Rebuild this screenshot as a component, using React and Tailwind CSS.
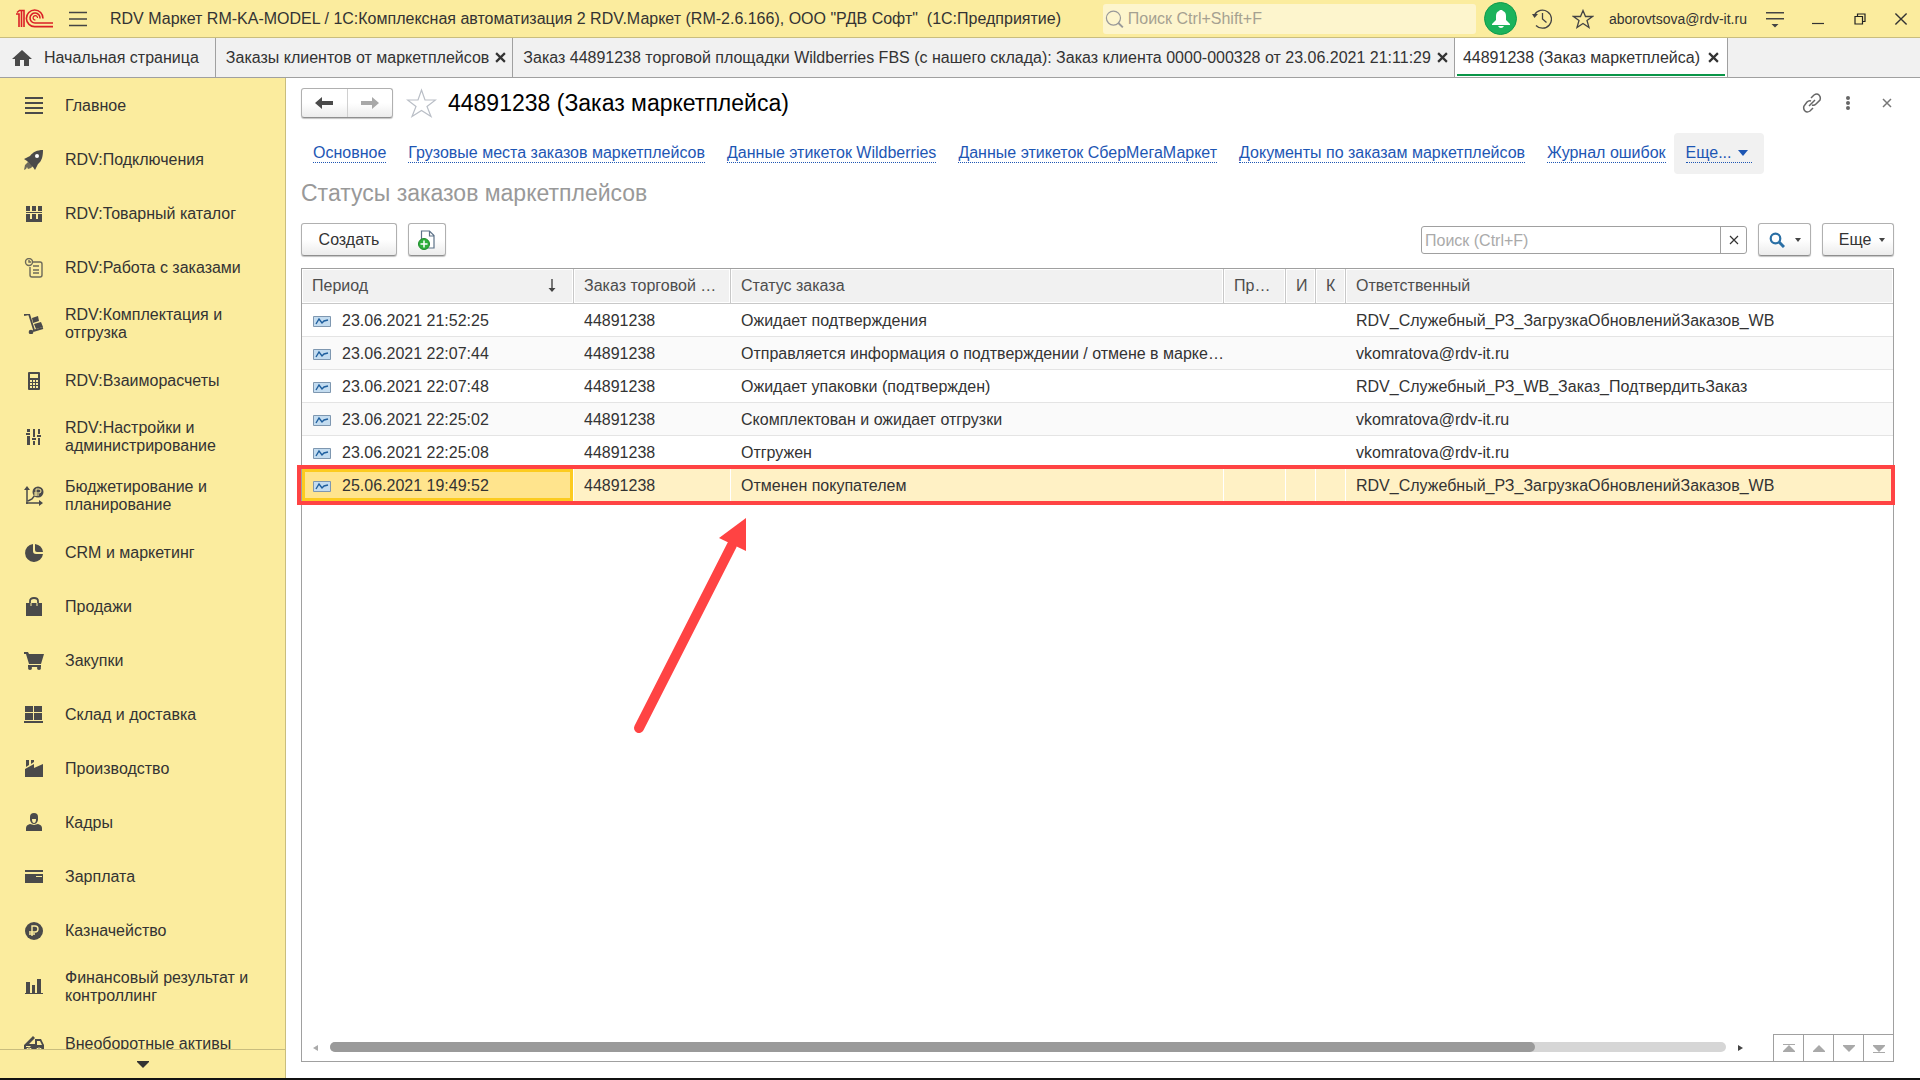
const menu = [
  {
    label: 'Главное',
    icon: <path d="M1 1h18v2H1zM1 6h18v2H1zM1 11h18v2H1zM1 16h18v2H1z" />,
  },
  {
    label: 'RDV:Подключения',
    icon: (
      <>
        <path d="M19 0C13 0 9 2 6 6L0 9l3 2 6 6 2 3 3-6c4-3 5-8 5-14z" />
        <path d="M4 12l-3 3-1 5 2-1 1-2 1 2 3-1 2-2z" opacity="0.8" />
        <circle cx="13" cy="6" r="2" fill="#fff" />
      </>
    ),
  },
  {
    label: 'RDV:Товарный каталог',
    icon: <path d="M2 2h4v5H2zM8 2h4v5H8zM14 2h4v5h-4zM2 8h16v1H2zM2 10h4v5H2zM8 10h4v5H8zM14 10h4v5h-4zM2 15h16v3H2z" />,
  },
  {
    label: 'RDV:Работа с заказами',
    icon: (
      <g fill="none" stroke="currentColor" strokeWidth="1.4" opacity="0.8">
        <path d="M9 4h7q2 0 2 2v11q0 2-2 2H8q-2 0-2-2V9" />
        <circle cx="5" cy="4" r="3.5" />
        <path d="M5 2v2h2M9 8h6M9 12h6M9 15h6" />
      </g>
    ),
  },
  {
    label: 'RDV:Комплектация и отгрузка',
    icon: (
      <>
        <path d="M0 1l5-1 5 16" fill="none" stroke="currentColor" strokeWidth="1.8" />
        <path d="M9 17l10-3" stroke="currentColor" strokeWidth="2" />
        <circle cx="7" cy="18" r="2.3" />
        <path d="M8 4l6-2 1 5-6 2zM10 10l7-2 2 5-7 2z" />
      </>
    ),
  },
  {
    label: 'RDV:Взаиморасчеты',
    icon: (
      <path
        fillRule="evenodd"
        d="M5 1h10q1 0 1 1v16q0 1-1 1H5q-1 0-1-1V2q0-1 1-1zM6 3v4h8V3zM6 9v2h2V9zM9 9v2h2V9zM12 9v2h2V9zM6 12v2h2v-2zM9 12v2h2v-2zM12 12v2h2v-2zM6 15v2h2v-2zM9 15v2h2v-2zM12 15v2h2v-2z"
      />
    ),
  },
  {
    label: 'RDV:Настройки и администрирование',
    icon: <path d="M3 2h3v3H3zM2 6h4v2H2zM3 9h3v9H3zM9 2h2v8H9zM8 11h4v2H8zM9 14h2v4H9zM14 2h2v5h-2zM13 8h4v2h-4zM14 11h2v7h-2z" />,
  },
  {
    label: 'Бюджетирование и планирование',
    icon: (
      <>
        <path d="M3 3v15M2 17h14M4 15l4-2 3-4" fill="none" stroke="currentColor" strokeWidth="1.5" />
        <path d="M3 0l3 4H0zM19 17l-4-3v6z" />
        <circle cx="14" cy="6" r="5.5" />
        <path d="M12 10V3h3q2 0 2 2t-2 2h-5M10 9h5" fill="none" stroke="#fbec9e" />
      </>
    ),
  },
  {
    label: 'CRM и маркетинг',
    icon: <path d="M9 1a9 9 0 1 0 10 10h-7q-3 0-3-3zM11 1v6q0 2 2 2h6q-1-7-8-8z" />,
  },
  {
    label: 'Продажи',
    icon: (
      <>
        <path d="M2 6h16v13H2z" />
        <path d="M6 9V4q0-3 4-3t4 3v5" fill="none" stroke="currentColor" strokeWidth="1.8" />
        <path d="M7 9V6M13 9V6" stroke="#fbec9e" />
      </>
    ),
  },
  {
    label: 'Закупки',
    icon: (
      <>
        <path d="M0 1h4l1 2h15l-3 10H5L2 3H0zM4 14h13v2H4z" />
        <circle cx="6" cy="17" r="2" />
        <circle cx="15" cy="17" r="2" />
      </>
    ),
  },
  {
    label: 'Склад и доставка',
    icon: <path d="M1 1h8v6H1zM10 1h8v6h-8zM1 8h8v7H1zM10 8h8v7h-8zM0 16h19v2H0z" />,
  },
  {
    label: 'Производство',
    icon: <path d="M1 18V10l9-5v4l9-4v13zM2 1h3v5l-3 2zM7 1h3v2L7 5z" />,
  },
  {
    label: 'Кадры',
    icon: (
      <>
        <path d="M6 4q0-4 4-4t4 4v3q-1 4-4 4T6 7z" />
        <path d="M2 18v-3q0-3 4-4l4 1 4-1q4 1 4 4v3z" />
        <path d="M8 6h4q0 4-2 4T8 6z" fill="#fbec9e" />
      </>
    ),
  },
  {
    label: 'Зарплата',
    icon: (
      <>
        <path d="M1 3h18v2H1zM1 7h18v9H1z" />
        <path d="M12 9h6v1h-6z" fill="#fbec9e" />
      </>
    ),
  },
  {
    label: 'Казначейство',
    icon: (
      <>
        <circle cx="10" cy="10" r="9" />
        <path d="M8 15V5h3q3 0 3 3t-3 3H5M5 13h6" fill="none" stroke="#fbec9e" strokeWidth="1.4" />
      </>
    ),
  },
  {
    label: 'Финансовый результат и контроллинг',
    icon: <path d="M2 5h4v12H2zM8 8h3v9H8zM13 2h4v15h-4zM1 16h18v1H1z" />,
  },
  {
    label: 'Внеоборотные активы',
    icon: (
      <>
        <path d="M0 11L9 2l2 2-6 6h6V5h6l3 6v6H0z" />
        <path d="M13 7h3l2 4h-5zM2 12h4l1 1H2z" fill="#fbec9e" />
        <circle cx="5" cy="17" r="3" stroke="#fbec9e" />
        <circle cx="15" cy="17" r="3" stroke="#fbec9e" />
      </>
    ),
  },
]

const tabs = [
  { label: 'Заказы клиентов от маркетплейсов' },
  { label: 'Заказ 44891238 торговой площадки Wildberries FBS (с нашего склада): Заказ клиента 0000-000328 от 23.06.2021 21:11:29' },
  { label: '44891238 (Заказ маркетплейса)', active: true },
]

const links = [
  'Основное',
  'Грузовые места заказов маркетплейсов',
  'Данные этикеток Wildberries',
  'Данные этикеток СберМегаМаркет',
  'Документы по заказам маркетплейсов',
  'Журнал ошибок',
]

const columns = ['Заказ торговой …', 'Статус заказа', 'Пр…', 'И', 'К', 'Ответственный']

const rows = [
  { date: '23.06.2021 21:52:25', status: 'Ожидает подтверждения', user: 'RDV_Служебный_РЗ_ЗагрузкаОбновленийЗаказов_WB' },
  { date: '23.06.2021 22:07:44', status: 'Отправляется информация о подтверждении / отмене в марке…', user: 'vkomratova@rdv-it.ru' },
  { date: '23.06.2021 22:07:48', status: 'Ожидает упаковки (подтвержден)', user: 'RDV_Служебный_РЗ_WB_Заказ_ПодтвердитьЗаказ' },
  { date: '23.06.2021 22:25:02', status: 'Скомплектован и ожидает отгрузки', user: 'vkomratova@rdv-it.ru' },
  { date: '23.06.2021 22:25:08', status: 'Отгружен', user: 'vkomratova@rdv-it.ru' },
  { date: '25.06.2021 19:49:52', status: 'Отменен покупателем', user: 'RDV_Служебный_РЗ_ЗагрузкаОбновленийЗаказов_WB', selected: true },
]

const pagers = [
  { label: 'В начало', d: 'M1 1h12v1H1zM7 2l6 6v1H1V8z' },
  { label: 'Назад', d: 'M7 2l6 6v1H1V8z' },
  { label: 'Вперед', d: 'M1 2h12v1L7 9 1 3z' },
  { label: 'В конец', d: 'M1 2h12v1L7 9 1 3zM1 9h12v1H1z' },
]

const raised = 'rounded-[3px] border border-[#b0b0b0] border-b-[#8f8f8f] bg-linear-to-b from-white from-50% to-[#ececec] shadow-[0_1px_1px_#c4c4c4]'

function Cross({ size, width }) {
  return (
    <svg width={size} height={size} viewBox="0 0 10 10" fill="none" stroke="currentColor" strokeWidth={width}>
      <path d="M1 1l8 8M9 1L1 9" />
    </svg>
  )
}

function Caret() {
  return (
    <svg width="6" height="4" viewBox="0 0 6 4" fill="#444">
      <path d="M0 0h6L3 4z" />
    </svg>
  )
}

function TitleBar() {
  return (
    <header className="flex h-[38px] shrink-0 items-center border-b border-[#c9bd7e] bg-[#fbec9e] pr-3 pl-4">
      <svg width="38" height="20" viewBox="0 0 38 20" fill="none" stroke="#da1f26" strokeWidth="1.6" className="shrink-0">
        <path d="M0 5h3v13M1 3.5l2.500-2H8V18M5.500 2v16" />
        <path d="M27 9.500A8.300 8.300 0 1 0 19 17.600H37" />
        <path d="M24 9.500A5 5 0 1 0 19 14H37" />
        <path d="M21.500 9a2.200 2.200 0 1 0-2 2" strokeWidth="1.2" />
      </svg>
      <button aria-label="Меню" className="ml-[15px]">
        <svg width="18" height="16" viewBox="0 0 18 16" stroke="#444" strokeWidth="1.4">
          <path d="M0 1.500h18M0 8h18M0 14.500h18" />
        </svg>
      </button>
      <h1 className="ml-[23px] flex-1 truncate whitespace-pre">
        RDV Маркет RM-KA-MODEL / 1С:Комплексная автоматизация 2 RDV.Маркет (RM-2.6.166), ООО "РДВ Софт"  (1С:Предприятие)
      </h1>
      <label className="flex h-[30px] w-[373px] items-center gap-1 rounded-[3px] bg-[#fdf5cd] pl-0.5">
        <svg width="20" height="20" viewBox="0 0 20 20" fill="none" stroke="#999" strokeWidth="1.3">
          <circle cx="9" cy="9" r="7.5" />
          <path d="M14 14l5 5" strokeWidth="2" />
        </svg>
        <input aria-label="Поиск" placeholder="Поиск Ctrl+Shift+F" className="w-full bg-transparent outline-none placeholder:text-[#a5a191]" />
      </label>
      <button aria-label="Уведомления" className="ml-2 flex size-[33px] items-center justify-center rounded-full border border-[#0e9a4c] bg-[#1bb35c]">
        <svg width="20" height="20" viewBox="0 0 20 20" fill="#fff">
          <path d="M9 1h2l1 1q3 1 3 5v4l4 4v1H1v-1l4-4V7q0-4 3-5zM7 17h6q-1 2-3 2t-3-2z" />
        </svg>
      </button>
      <button aria-label="История" className="ml-[15px]">
        <svg width="20" height="20" viewBox="0 0 20 20" fill="none" stroke="#444" strokeWidth="1.3">
          <path d="M2.500 6A9 9 0 1 1 4 16.500M10.500 4v6l4 3.500" />
          <path d="M0 5h6L2.500 9z" fill="#444" stroke="none" />
        </svg>
      </button>
      <button aria-label="Избранное" className="ml-5">
        <svg width="22" height="20" viewBox="0 0 22 20" fill="none" stroke="#444" strokeWidth="1.3">
          <path d="M11 1.500l2.500 6h7l-5.500 4 2 7-6-4-6 4 2-7-5.500-4h7z" />
        </svg>
      </button>
      <span className="ml-[15px] w-[143px] text-sm">aborovtsova@rdv-it.ru</span>
      <button aria-label="Сервис" className="ml-[14px]">
        <svg width="18" height="18" viewBox="0 0 18 18" fill="#444">
          <path d="M0 2h18v1.500H0zM0 8h18v1.500H0zM5.500 14h7L9 17.500z" />
        </svg>
      </button>
      <button aria-label="Свернуть" className="ml-7">
        <svg width="12" height="12" viewBox="0 0 12 12" stroke="#333" strokeWidth="1.2">
          <path d="M0 10.500h12" />
        </svg>
      </button>
      <button aria-label="Развернуть" className="ml-[30px]">
        <svg width="12" height="12" viewBox="0 0 12 12" fill="none" stroke="#222" strokeWidth="1.2">
          <path d="M1 3.500h7.500V11H1zM3.500 3.500V1H11v7.500H8.500" />
        </svg>
      </button>
      <button aria-label="Закрыть программу" className="ml-7">
        <Cross size="14" width="1" />
      </button>
    </header>
  )
}

function TabBar() {
  return (
    <nav className="flex h-10 shrink-0 border-b border-[#a0a0a0] bg-[#f1f1f1]">
      <button className="flex items-center gap-3 border-r border-[#a0a0a0] pr-4 pl-3">
        <svg width="20" height="18" viewBox="0 0 20 18" fill="#4a4a4a">
          <path d="M10 1l10 9h-3v7h-5v-6H8v6H3v-7H0z" />
        </svg>
        Начальная страница
      </button>
      {tabs.map((t) => (
        <div
          key={t.label}
          className={t.active ? 'flex border-r border-[#a0a0a0] bg-white px-0.5' : 'flex border-r border-[#a0a0a0] px-0.5'}
        >
          <div className={t.active ? 'mb-px flex items-center gap-2 border-b-2 border-[#0a9648] px-1.5 pt-[3px]' : 'flex items-center gap-1.5 pr-1 pl-2'}>
            <button className="whitespace-nowrap">{t.label}</button>
            <button aria-label="Закрыть вкладку"><Cross size="11" width="2" /></button>
          </div>
        </div>
      ))}
    </nav>
  )
}

function Sidebar() {
  return (
    <aside className="flex w-[286px] shrink-0 flex-col border-r border-[#c9bd7e] bg-[#fbec9e]">
      <ul className="min-h-0 flex-1 overflow-hidden">
        {menu.map((m) => (
          <li key={m.label}>
            <a href="#" className="flex min-h-[54px] items-center gap-[21px] pt-3 pr-8 pb-[11px] pl-6 leading-[18px]">
              <svg width="20" height="20" viewBox="0 0 20 20" fill="currentColor" className="shrink-0 text-[#4a4a4a]">
                {m.icon}
              </svg>
              {m.label}
            </a>
          </li>
        ))}
      </ul>
      <button aria-label="Показать еще" className="flex h-[29px] shrink-0 items-center justify-center border-t border-[#c9bd7e]">
        <svg width="12" height="7" viewBox="0 0 12 7" fill="#333">
          <path d="M0 0h12v1L6 7 0 1z" />
        </svg>
      </button>
    </aside>
  )
}

function FormHeader() {
  return (
    <div className="flex h-[30px] items-center">
      <div className={`flex h-[30px] w-[92px] ${raised}`}>
        <button aria-label="Назад" className="flex flex-1 items-center justify-center border-r border-[#d0d0d0]">
          <svg width="18" height="14" viewBox="0 0 18 14" fill="#4a4a4a">
            <path d="M0 7l7-6v4h11v4H7v4z" />
          </svg>
        </button>
        <button aria-label="Вперед" className="flex flex-1 items-center justify-center">
          <svg width="18" height="14" viewBox="0 0 18 14" fill="#a8a8a8">
            <path d="M18 7l-7-6v4H0v4h11v4z" />
          </svg>
        </button>
      </div>
      <button aria-label="В избранное" className="ml-[13px]">
        <svg width="31" height="30" viewBox="0 0 31 30" fill="none" stroke="#b9bec6" strokeWidth="1.2">
          <path d="M15.500 2l3.500 10h10.500l-8.500 6.500 4 10-9.500-6-9.500 6 4-10L1.500 12H12z" />
        </svg>
      </button>
      <h2 className="ml-[11px] flex-1 text-[23px] text-black">44891238 (Заказ маркетплейса)</h2>
      <button aria-label="Ссылка">
        <svg width="20" height="20" viewBox="0 0 20 20" fill="none" stroke="#666" strokeWidth="1.5">
          <path d="M9 5l3-3q3-2 5 0t1 5l-4 4q-2 2-4 1M11 15l-3 3q-3 2-5 0t-1-5l3-4q2-2 4-1M7 13l6-6" />
        </svg>
      </button>
      <button aria-label="Еще действия" className="ml-6">
        <svg width="4" height="14" viewBox="0 0 4 14" fill="#666">
          <circle cx="2" cy="2" r="2" />
          <circle cx="2" cy="7" r="2" />
          <circle cx="2" cy="12" r="2" />
        </svg>
      </button>
      <button aria-label="Закрыть" className="mr-0.5 ml-8 text-[#777]"><Cross size="10" width="1.5" /></button>
    </div>
  )
}

function LinkBar() {
  return (
    <nav className="mt-[14px] flex h-[42px] items-center gap-[22px] pl-3 text-[#1d56b4]">
      {links.map((l) => (
        <a key={l} href="#" className="border-b border-dotted border-[#1d56b4] leading-[18px] whitespace-nowrap">{l}</a>
      ))}
      <button className="-ml-[14px] flex h-[41px] items-center rounded bg-[#f1f1f1] px-3">
        <span className="flex items-center gap-1.5 border-b border-dotted border-[#1d56b4] pr-1 leading-[18px]">
          Еще...
          <svg width="10" height="6" viewBox="0 0 10 6" fill="#1d56b4">
            <path d="M0 0h10L5 6z" />
          </svg>
        </span>
      </button>
    </nav>
  )
}

function Toolbar() {
  return (
    <div className="mt-[14px] flex h-[33px] items-center">
      <button className={`h-[33px] w-24 ${raised}`}>Создать</button>
      <button aria-label="Создать копированием" className={`ml-[11px] flex h-[33px] w-[38px] items-center justify-center ${raised}`}>
        <svg width="18" height="20" viewBox="0 0 18 20" fill="none">
          <path d="M3.500 1h8l4.500 4.500V18H3.500zM11.500 1v5H16" fill="#fff" stroke="#5d7288" strokeWidth="1.2" />
          <circle cx="6" cy="14" r="5.5" fill="#2eaf3c" stroke="#1e8a2b" />
          <path d="M2.500 14h7M6 10.500v7" stroke="#fff" strokeWidth="1.5" />
        </svg>
      </button>
      <div className="ml-auto flex h-7 w-[326px] rounded-[3px] border border-[#a0a0a0]">
        <input aria-label="Поиск по списку" placeholder="Поиск (Ctrl+F)" className="min-w-0 flex-1 pt-0.5 pl-[3px] outline-none placeholder:text-[#aaa]" />
        <button aria-label="Очистить" className="flex w-[26px] items-center justify-center border-l border-[#a0a0a0]">
          <Cross size="10" width="1.2" />
        </button>
      </div>
      <button aria-label="Найти" className={`ml-[11px] flex h-[33px] w-[53px] items-center justify-center gap-[10px] ${raised}`}>
        <svg width="16" height="16" viewBox="0 0 16 16" fill="none" stroke="#2a6fa5">
          <circle cx="6.5" cy="6.5" r="4.8" strokeWidth="2.2" />
          <path d="M10 10l5 5" strokeWidth="3" />
        </svg>
        <Caret />
      </button>
      <button className={`ml-[11px] flex h-[33px] w-[72px] items-center justify-center gap-2 pl-2 ${raised}`}>
        Еще
        <Caret />
      </button>
    </div>
  )
}

function RecordIcon() {
  return (
    <svg width="18" height="11" viewBox="0 0 18 11" fill="none" className="shrink-0">
      <path d="M.5.5h17v10H.5z" fill="#c3dcf0" stroke="#7e97b0" />
      <path d="M3 8l3-5 3 4 2-2 4-1" stroke="#1f5f9e" strokeWidth="1.4" />
    </svg>
  )
}

function StatusTable() {
  return (
    <table className="w-full table-fixed border-separate border-spacing-0 text-left">
      <colgroup>
        <col className="w-[272px]" />
        <col className="w-[157px]" />
        <col className="w-[493px]" />
        <col className="w-[62px]" />
        <col className="w-[30px]" />
        <col className="w-[30px]" />
        <col />
      </colgroup>
      <thead>
        <tr className="h-[35px] bg-[#f1f1f1] text-[#4d4d4d]">
          <th className="border-r border-b border-[#c8c8c8] p-0 font-normal shadow-[inset_0_0_0_1px_#fff]">
            <div className="flex items-center justify-between pr-4 pl-[10px]">
              Период
              <svg width="10" height="14" viewBox="0 0 10 14" fill="none" stroke="#444" strokeWidth="1.4">
                <path d="M5 0v12" />
                <path d="M1.500 9h7L5 13z" fill="#444" stroke="none" />
              </svg>
            </div>
          </th>
          {columns.map((c) => (
            <th
              key={c}
              className="overflow-hidden border-r border-b border-[#c8c8c8] p-0 pl-[10px] font-normal whitespace-nowrap shadow-[inset_0_0_0_1px_#fff] last:border-r-0"
            >
              {c}
            </th>
          ))}
        </tr>
      </thead>
      <tbody>
        {rows.map((r) => (
          <tr
            key={r.date}
            className={
              r.selected
                ? 'h-[33px] bg-[#fff1c5] *:border-r *:border-b *:border-white'
                : 'h-[33px] even:bg-[#fafafa] *:border-b *:border-[#e4e4e4]'
            }
          >
            <td className="p-0">
              <div className={r.selected ? 'flex h-8 items-center gap-[11px] bg-[#ffe48d] pt-0.5 pl-[11px] shadow-[inset_0_0_0_3px_#fccb1f]' : 'flex h-8 items-center gap-[11px] pt-0.5 pl-[11px]'}>
                <RecordIcon />
                {r.date}
              </div>
            </td>
            <td className="p-0 pt-0.5 pl-[10px]">44891238</td>
            <td className="truncate p-0 pt-0.5 pl-[10px]">{r.status}</td>
            <td />
            <td />
            <td />
            <td className="truncate p-0 pt-0.5 pl-[10px]">{r.user}</td>
          </tr>
        ))}
      </tbody>
    </table>
  )
}

function Scroller() {
  return (
    <div className="mt-auto flex h-[27px] items-center">
      <svg width="5" height="6" viewBox="0 0 5 6" fill="#aaa" className="ml-[11px]">
        <path d="M5 0v6L0 3z" />
      </svg>
      <div className="mb-0.5 ml-3 flex h-[10px] flex-1 rounded-full bg-[#d6d6d6]">
        <div className="w-[86.3%] rounded-full bg-[#9a9a9a]" />
      </div>
      <svg width="5" height="6" viewBox="0 0 5 6" fill="#444" className="mr-[30px] ml-3">
        <path d="M0 0v6l5-3z" />
      </svg>
      <div className="flex h-full border-t border-[#a0a0a0]">
        {pagers.map((p) => (
          <button key={p.label} aria-label={p.label} className="flex w-[30px] items-center justify-center border-l border-[#a0a0a0]">
            <svg width="14" height="11" viewBox="0 0 14 11" fill="#a9a9a9">
              <path d={p.d} />
            </svg>
          </button>
        ))}
      </div>
    </div>
  )
}

export default function App() {
  return (
    <div className="flex h-screen flex-col overflow-hidden border-b-2 border-[#111] bg-white font-['Liberation_Sans',Arial,sans-serif] text-base text-[#333]">
      <TitleBar />
      <TabBar />
      <div className="flex min-h-0 flex-1">
        <Sidebar />
        <main className="flex min-w-0 flex-1 flex-col pt-[10px] pr-[26px] pb-4 pl-[15px]">
          <FormHeader />
          <LinkBar />
          <h3 className="mt-[3px] text-[23px] leading-8 text-[#999]">Статусы заказов маркетплейсов</h3>
          <Toolbar />
          <section className="relative mt-3 flex flex-1 flex-col border border-[#a0a0a0]">
            <StatusTable />
            {/* выделение строки и стрелка поверх таблицы */}
            <div className="pointer-events-none absolute top-[196px] -right-0.5 -left-[5px] h-10 border-4 border-[#ff4343]" />
            <svg width="130" height="230" viewBox="0 0 130 230" className="pointer-events-none absolute top-[245px] left-[325px]" fill="#ff4343">
              <path d="M12 214L105 31" stroke="#ff4343" strokeWidth="10" strokeLinecap="round" />
              <path d="M119 4v33L92 24z" />
            </svg>
            <Scroller />
          </section>
        </main>
      </div>
    </div>
  )
}
